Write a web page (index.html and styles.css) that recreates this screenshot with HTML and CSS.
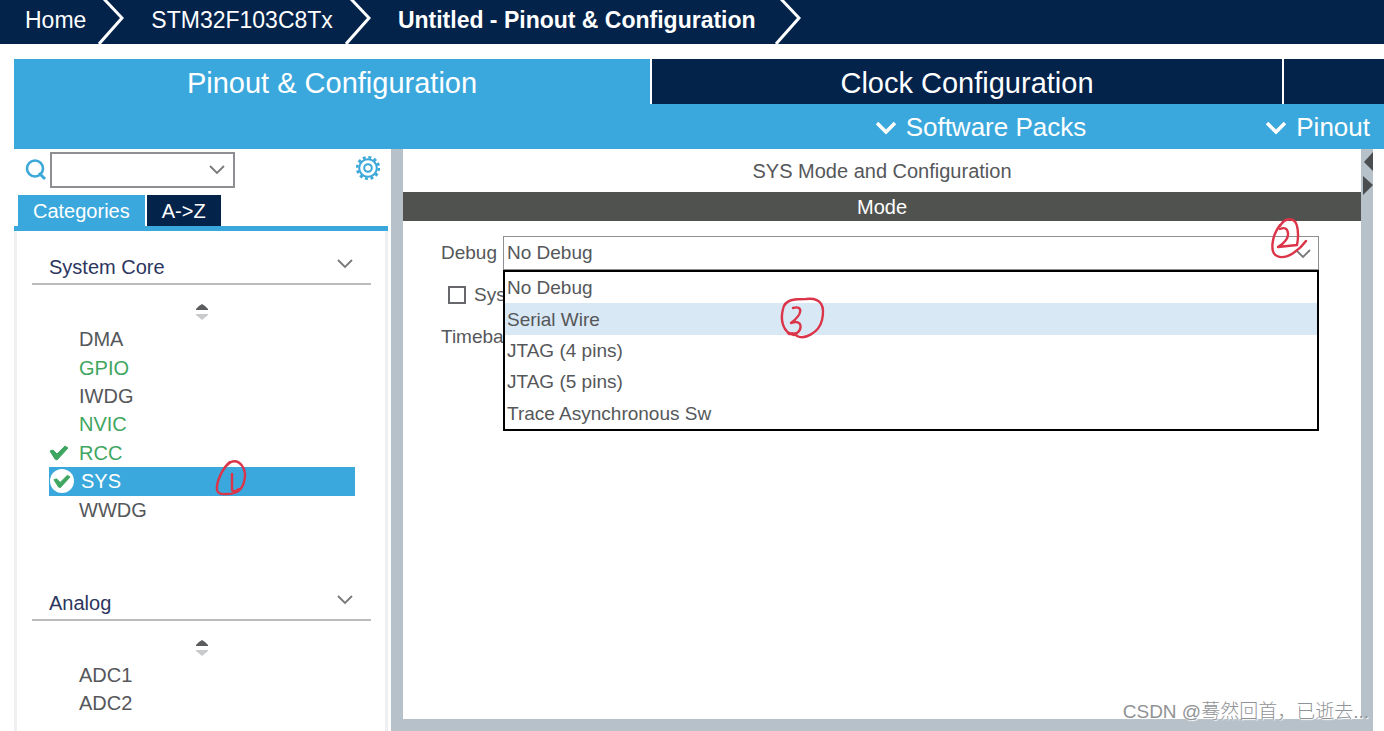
FILE: index.html
```html
<!DOCTYPE html>
<html lang="en">
<head>
<meta charset="utf-8">
<title>Untitled - Pinout &amp; Configuration</title>
<link rel="stylesheet" href="styles.css">
</head>
<body>
<svg class="defs" aria-hidden="true">
  <symbol id="crumb" viewBox="0 0 26 44"><path d="M6 -1 24 18 1 44" fill="none" stroke="#fff" stroke-width="3"/></symbol>
  <symbol id="chev-bold" viewBox="0 0 20 14"><path d="M1 2 10 11 19 2" fill="none" stroke="#fff" stroke-width="3.6"/></symbol>
  <symbol id="chev" viewBox="0 0 16 10"><path d="M1 1 8 8 15 1" fill="none" stroke="#77797b" stroke-width="1.8"/></symbol>
  <symbol id="sort" viewBox="0 0 12 16"><path d="M6 0 9 2 12 5V6H0V5L3 2Z" fill="#5b5c5e"/><path d="M0 10H12V11L6 16 0 11Z" fill="#c9cacb"/></symbol>
  <symbol id="tick" viewBox="0 0 20 16"><path d="M1 6 4 5 8 9 16 1 19 3 8 15 6 14Z" fill="#3fa662" stroke="#3fa662"/></symbol>
</svg>

<nav class="crumbs" aria-label="Breadcrumb">
  <a class="crumb" href="#home">Home</a>
  <svg class="crumb-sep"><use href="#crumb"/></svg>
  <a class="crumb" href="#chip">STM32F103C8Tx</a>
  <svg class="crumb-sep"><use href="#crumb"/></svg>
  <a class="crumb crumb-current" href="#project" aria-current="page">Untitled - Pinout &amp; Configuration</a>
  <svg class="crumb-sep"><use href="#crumb"/></svg>
</nav>

<div class="workspace">
  <div class="tabs">
    <button class="tab tab-active" type="button">Pinout &amp; Configuration</button>
    <button class="tab" type="button">Clock Configuration</button>
    <button class="tab" type="button" aria-label="Project Manager"></button>
  </div>
  <div class="toolbar">
    <button class="menu" type="button"><svg class="menu-icon"><use href="#chev-bold"/></svg>Software Packs</button>
    <button class="menu" type="button"><svg class="menu-icon"><use href="#chev-bold"/></svg>Pinout</button>
  </div>

  <div class="columns">
    <aside class="side">
      <div class="search">
        <svg class="search-icon" viewBox="0 0 22 22"><circle cx="10" cy="9.5" r="8" fill="none" stroke="#3ca8da" stroke-width="2.6"/><path d="M14 14 20 20" stroke="#3ca8da" stroke-width="3"/></svg>
        <div class="search-box">
          <input class="search-input" type="text" aria-label="Search">
          <svg class="chev"><use href="#chev"/></svg>
        </div>
        <button class="gear" type="button" aria-label="Settings">
          <svg class="gear-icon" viewBox="0 0 26 26" fill="none" stroke="#3ca8da"><circle cx="13" cy="13" r="10.8" stroke-width="2.6" stroke-dasharray="3 2.655"/><circle cx="13" cy="13" r="8.8" stroke-width="2"/><circle cx="13" cy="13" r="3.8" stroke-width="2"/></svg>
        </button>
      </div>
      <div class="side-tabs">
        <button class="side-tab side-tab-active" type="button">Categories</button>
        <button class="side-tab" type="button">A-&gt;Z</button>
      </div>
      <div class="tree">
        <section class="group">
          <button class="group-head" type="button">System Core<svg class="chev group-chev"><use href="#chev"/></svg></button>
          <svg class="sort"><use href="#sort"/></svg>
          <ul class="items items-core">
            <li class="item">DMA</li>
            <li class="item item-on">GPIO</li>
            <li class="item">IWDG</li>
            <li class="item item-on">NVIC</li>
            <li class="item item-on"><svg class="tick"><use href="#tick"/></svg>RCC</li>
            <li class="item item-selected"><span class="badge"><svg class="badge-tick"><use href="#tick"/></svg></span>SYS
              <svg class="mark mark-one" viewBox="0 0 34 38"><path d="M15 3C8 8 1 23 2 31Q3 36 12 35 26 35 29 23C33 9 24 0 16 3Q11 6 7 13M17 15 17 31Q19 34 24 30"/></svg>
            </li>
            <li class="item">WWDG</li>
          </ul>
        </section>
        <section class="group">
          <button class="group-head" type="button">Analog<svg class="chev group-chev"><use href="#chev"/></svg></button>
          <svg class="sort"><use href="#sort"/></svg>
          <ul class="items">
            <li class="item">ADC1</li>
            <li class="item">ADC2</li>
          </ul>
        </section>
      </div>
    </aside>

    <div class="frame">
      <main class="panel">
        <h1 class="panel-title">SYS Mode and Configuration</h1>
        <h2 class="panel-band">Mode</h2>
        <form class="form">
          <div class="row">
            <label class="label" for="debug">Debug</label>
            <div class="combo">
              <select class="combo-select" id="debug">
                <option>No Debug</option><option>Serial Wire</option><option>JTAG (4 pins)</option><option>JTAG (5 pins)</option><option>Trace Asynchronous Sw</option>
              </select>
              <svg class="chev combo-chev"><use href="#chev"/></svg>
              <svg class="mark mark-two" viewBox="0 0 38 42"><path d="M10 9C15 0 25 0 27 9 29 17 28 23 27 28L8 30Q19 23 18 16 17 9 10 12M10 8C1 20 0 36 7 39 17 44 31 31 36 24"/></svg>
              <ul class="popup" role="listbox" aria-label="Debug">
                <li class="option" role="option">No Debug</li>
                <li class="option option-hover" role="option">Serial Wire
                  <svg class="mark mark-three" viewBox="0 0 44 42"><path d="M14 38C3 36 0 23 3 12 5 2 15 2 26 2 42 0 45 10 42 23 39 36 24 43 17 39Q14 35 9 37M13 11C23 8 23 17 11 26 23 22 22 32 17 36Q11 38 8 36"/></svg>
                </li>
                <li class="option" role="option">JTAG (4 pins)</li>
                <li class="option" role="option">JTAG (5 pins)</li>
                <li class="option" role="option">Trace Asynchronous Sw</li>
              </ul>
            </div>
          </div>
          <div class="row row-check">
            <input class="check" type="checkbox" id="wake"><label for="wake">Sys</label>
          </div>
          <div class="row"><span>Timeba</span></div>
        </form>
      </main>
      <svg class="grips" viewBox="0 0 12 48"><path d="M12 3V22L3 13Z M2 27V46L12 36Z" fill="#4b4e50"/></svg>
    </div>
  </div>
</div>
<div class="watermark" lang="zh">CSDN @蓦然回首，已逝去...</div>
</body>
</html>
```
FILE: styles.css
```css
* { box-sizing: border-box; }
body {
  margin: 0;
  min-height: 100vh;
  display: flex;
  flex-direction: column;
  position: relative;
  overflow: hidden;
  background: #fff;
  color: #55575a;
  font: 20px/24px "Liberation Sans", Arial, sans-serif;
}
button, input, select { font: inherit; color: inherit; border: 0; padding: 0; margin: 0; background: none; border-radius: 0; }
ul { list-style: none; margin: 0; padding: 0; }
h1, h2 { margin: 0; font: inherit; }
svg { display: block; flex: none; }
.defs { position: absolute; width: 0; height: 0; }

.crumbs {
  display: flex;
  align-items: center;
  height: 44px;
  padding-left: 25px;
  background: #03234b;
  overflow: hidden;
}
.crumb { color: #fff; text-decoration: none; font-size: 23px; line-height: 28px; padding-bottom: 4px; white-space: nowrap; }
.crumb-current { font-weight: bold; padding-right: 7px; }
.crumb-sep { width: 26px; height: 44px; margin: 0 27px 0 12px; }

.workspace { flex: 1; display: flex; flex-direction: column; margin: 15px 0 0 14px; }
.tabs { display: grid; grid-template-columns: 636fr 630fr 100fr; gap: 2px; height: 45px; }
.tab { background: #03234b; color: #fff; font-size: 29px; line-height: 45px; padding-top: 2px; white-space: nowrap; }
.tab-active { background: #3aa8dc; }
.toolbar { display: flex; justify-content: flex-end; gap: 180px; height: 45px; padding-right: 14px; background: #3aa8dc; }
.menu { display: flex; align-items: center; gap: 10px; color: #fff; font-size: 26px; line-height: 45px; padding-top: 2px; }
.menu-icon { width: 20px; height: 14px; }

.columns { flex: 1; display: grid; grid-template-columns: 377px 1fr; }
.side { display: flex; flex-direction: column; padding-right: 3px; }
.search { display: flex; align-items: center; padding: 3px 7px 7px 11px; }
.search-icon { width: 22px; height: 22px; }
.search-box { display: flex; align-items: center; width: 185px; height: 36px; margin-left: 3px; padding-right: 8px; border: 2px solid #8d8f93; }
.search-input { flex: 1; min-width: 0; height: 100%; outline: 0; }
.chev { width: 16px; height: 10px; }
.gear { margin-left: auto; padding-bottom: 4px; }
.gear-icon { width: 26px; height: 26px; }
.side-tabs { display: flex; gap: 2px; padding-left: 4px; border-bottom: 5px solid #3aa8dc; }
.side-tab { background: #03234b; color: #fff; padding: 0 15px; height: 31px; }
.side-tab-active { background: #3aa8dc; }
.tree { flex: 1; padding: 18px 14px 0 15px; border: solid #eef0f2; border-width: 0 3px; }
.group-head {
  display: flex;
  justify-content: space-between;
  width: 100%;
  height: 36px;
  padding: 6px 18px 0 17px;
  border-bottom: 2px solid #b9bbbd;
  color: #2c3660;
}
.group-chev { margin-top: 4px; }
.sort { width: 12px; height: 16px; margin: 19px auto 4px; }
.items { display: grid; grid-auto-rows: 28px; padding: 1px 16px 0 17px; }
.items-core { height: 200px; grid-auto-rows: 1fr; margin-bottom: 61px; }
.item { position: relative; display: flex; align-items: center; padding-left: 30px; }
.item-on { color: #3fa662; }
.tick { width: 20px; height: 16px; margin: 0 10px 0 -30px; }
.item-selected { background: #3aa8dc; color: #fff; padding-left: 1px; gap: 7px; }
.badge { display: grid; place-items: center; width: 24px; height: 24px; border-radius: 50%; background: #fff; }
.badge-tick { width: 18px; height: 15px; }

.frame { display: grid; grid-template-columns: 1fr 12px; padding: 0 0 12px 12px; margin-right: 11px; background: #b7c1c9; }
.panel { background: #fff; min-width: 0; }
.panel-title { text-align: center; line-height: 43px; padding-top: 1px; height: 43px; }
.panel-band { text-align: center; line-height: 29px; padding-top: 1px; height: 29px; background: #505250; color: #fff; }
.panel-band, .panel-title { font-size: 20px; }
.form { padding: 15px 42px 0 38px; font-size: 19px; }
.row { display: flex; align-items: center; height: 34px; margin-bottom: 8px; white-space: nowrap; }
.label { width: 62px; }
.combo { position: relative; flex: 1; height: 34px; border: 1px solid #8d8f93; display: flex; }
.combo-select { appearance: none; width: 100%; padding-left: 3px; outline: 0; }
.combo-chev { position: absolute; right: 7px; top: 12px; }
.popup { position: absolute; z-index: 1; left: -1px; right: -1px; top: 33px; height: 161px; display: grid; grid-auto-rows: 1fr; border: 2px solid #000; background: #fff; }
.option { position: relative; display: flex; align-items: center; padding: 1px 0 0 2px; }
.option-hover { background: #d9e8f5; }
.row-check { padding-left: 7px; }
.check { appearance: none; width: 18px; height: 18px; border: 2px solid #66686b; margin-right: 8px; }
.grips { width: 12px; height: 48px; }

.mark { position: absolute; z-index: 2; overflow: visible; fill: none; stroke: #dc3448; stroke-width: 2.4; stroke-linecap: round; stroke-linejoin: round; }
.mark-one { width: 34px; height: 38px; left: 166px; top: -8px; }
.mark-two { width: 38px; height: 42px; right: 10px; top: -20px; }
.mark-three { width: 44px; height: 42px; left: 275px; top: -6px; }
.watermark { position: absolute; right: 15px; bottom: 5px; font: 300 19px/28px "Liberation Sans", "Noto Sans CJK TC", sans-serif; color: #909396; text-shadow: 1px 1px 1px #fff; white-space: nowrap; }
```
